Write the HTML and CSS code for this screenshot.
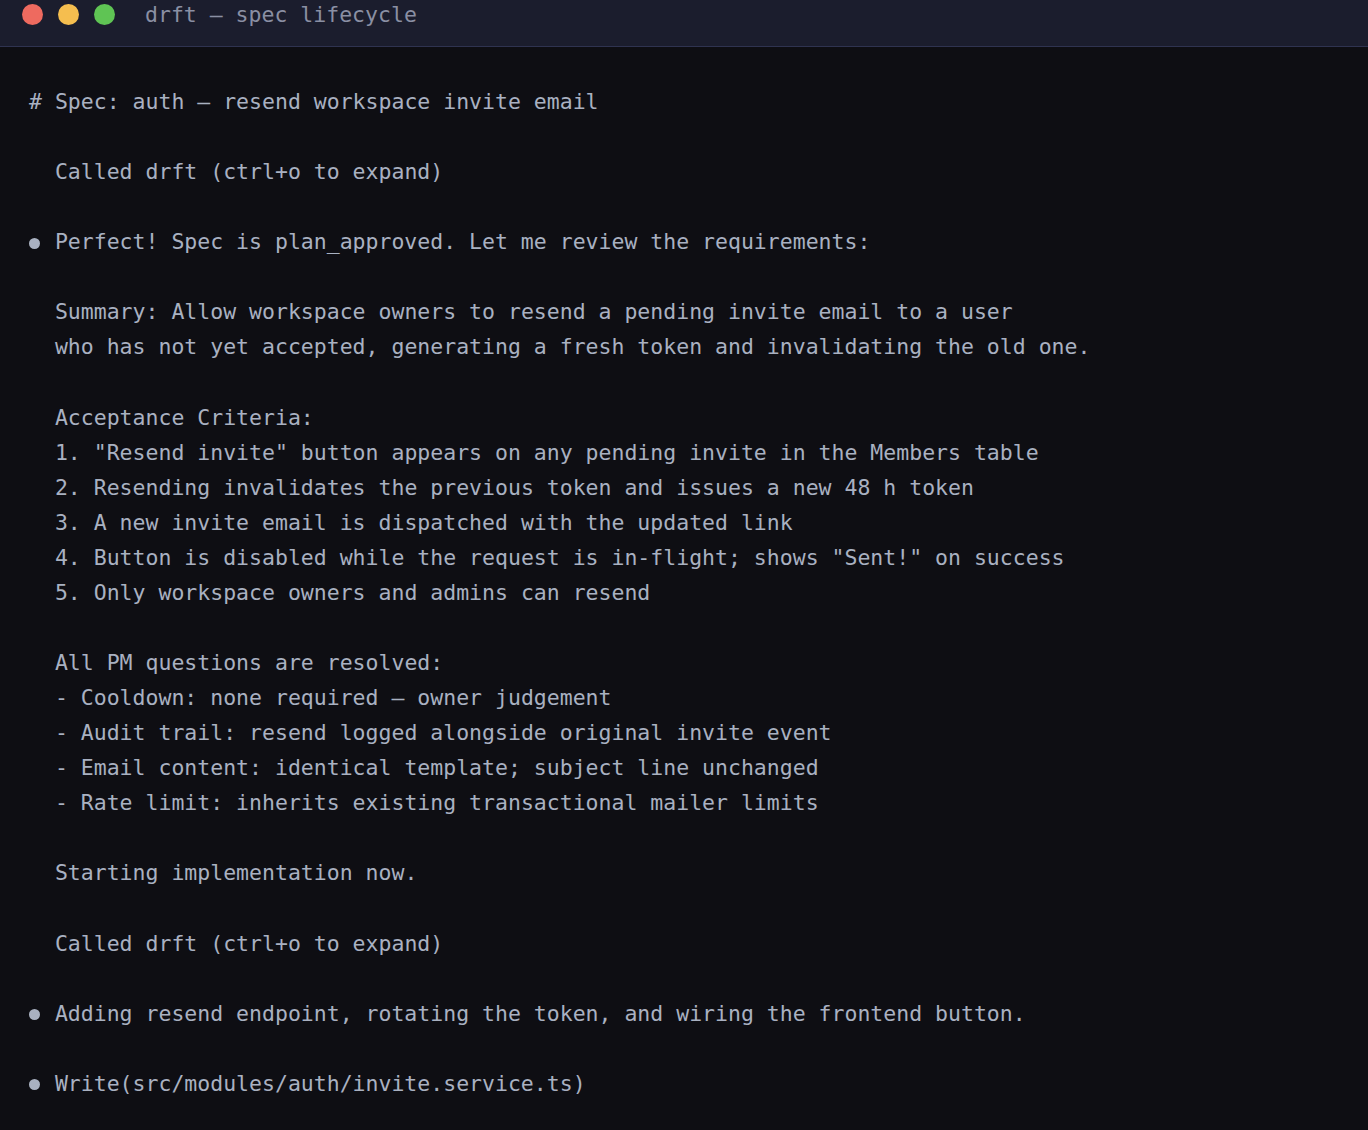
FILE: index.html
```html
<!DOCTYPE html>
<html lang="en">
<head>
<meta charset="utf-8">
<title>drft — spec lifecycle</title>
<link rel="stylesheet" href="styles.css">
</head>
<body>
<div class="window">
  <header class="titlebar">
    <div class="lights">
      <span class="light red"></span>
      <span class="light yellow"></span>
      <span class="light green"></span>
    </div>
    <div class="title">drft — spec lifecycle</div>
  </header>
  <main class="term">
    <div class="line"># Spec: auth — resend workspace invite email</div>
    <div class="line"></div>
    <div class="line">  Called drft (ctrl+o to expand)</div>
    <div class="line"></div>
    <div class="line"><span class="bullet"></span> Perfect! Spec is plan_approved. Let me review the requirements:</div>
    <div class="line"></div>
    <div class="line">  Summary: Allow workspace owners to resend a pending invite email to a user</div>
    <div class="line">  who has not yet accepted, generating a fresh token and invalidating the old one.</div>
    <div class="line"></div>
    <div class="line">  Acceptance Criteria:</div>
    <div class="line">  1. "Resend invite" button appears on any pending invite in the Members table</div>
    <div class="line">  2. Resending invalidates the previous token and issues a new 48 h token</div>
    <div class="line">  3. A new invite email is dispatched with the updated link</div>
    <div class="line">  4. Button is disabled while the request is in-flight; shows "Sent!" on success</div>
    <div class="line">  5. Only workspace owners and admins can resend</div>
    <div class="line"></div>
    <div class="line">  All PM questions are resolved:</div>
    <div class="line">  - Cooldown: none required — owner judgement</div>
    <div class="line">  - Audit trail: resend logged alongside original invite event</div>
    <div class="line">  - Email content: identical template; subject line unchanged</div>
    <div class="line">  - Rate limit: inherits existing transactional mailer limits</div>
    <div class="line"></div>
    <div class="line">  Starting implementation now.</div>
    <div class="line"></div>
    <div class="line">  Called drft (ctrl+o to expand)</div>
    <div class="line"></div>
    <div class="line"><span class="bullet"></span> Adding resend endpoint, rotating the token, and wiring the frontend button.</div>
    <div class="line"></div>
    <div class="line"><span class="bullet"></span> Write(src/modules/auth/invite.service.ts)</div>
  </main>
</div>
</body>
</html>
```
FILE: styles.css
```css
html, body {
  margin: 0;
  padding: 0;
  background: #0e0e13;
}

body {
  font-family: "DejaVu Sans Mono", "Liberation Mono", monospace;
  font-size: 21.5px;
  color: #a9b1c1;
}

.window {
  min-height: 1130px;
  background: #0e0e13;
}

.titlebar {
  height: 46px;
  background: #1b1d2d;
  border-bottom: 1px solid #2f3350;
  display: flex;
  align-items: flex-start;
  box-sizing: content-box;
}

.lights {
  display: flex;
  gap: 15px;
  padding-left: 22px;
  padding-top: 4px;
}

.light {
  width: 21px;
  height: 21px;
  border-radius: 50%;
  display: block;
}

.light.red { background: #ee6a5f; }
.light.yellow { background: #f5be4f; }
.light.green { background: #5fc454; }

.title {
  margin-left: 30px;
  padding-top: 1px;
  line-height: 28px;
  color: #8a8fa3;
  white-space: pre;
}

.term {
  padding: 37px 0 0 29px;
}

.line {
  height: 35.07px;
  line-height: 35.07px;
  white-space: pre;
}

.bullet {
  display: inline-block;
  width: 12.94px;
  height: 11px;
  position: relative;
  vertical-align: middle;
}

.bullet::before {
  content: "";
  position: absolute;
  left: 0;
  top: 0;
  width: 11px;
  height: 11px;
  border-radius: 50%;
  background: #a9b1c1;
}
```
